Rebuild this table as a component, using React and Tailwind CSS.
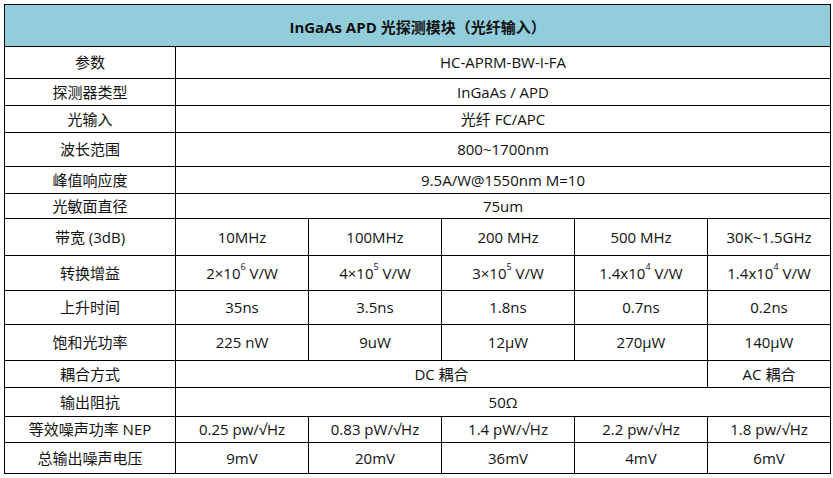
const rows = [
  { label: "参数", h: 32, cells: [{ t: "HC-APRM-BW-I-FA", span: 5 }] },
  { label: "探测器类型", h: 27, cells: [{ t: "InGaAs / APD", span: 5 }] },
  { label: "光输入", h: 27, cells: [{ t: "光纤 FC/APC", span: 5 }] },
  { label: "波长范围", h: 34, cells: [{ t: "800~1700nm", span: 5 }] },
  { label: "峰值响应度", h: 27, cells: [{ t: "9.5A/W@1550nm M=10", span: 5 }] },
  { label: "光敏面直径", h: 25, cells: [{ t: "75um", span: 5 }] },
  {
    label: "带宽 (3dB)",
    h: 37,
    cells: [{ t: "10MHz" }, { t: "100MHz" }, { t: "200 MHz" }, { t: "500 MHz" }, { t: "30K~1.5GHz" }],
  },
  {
    label: "转换增益",
    h: 35,
    cells: [
      { t: <>2×10<sup>6</sup> V/W</> },
      { t: <>4×10<sup>5</sup> V/W</> },
      { t: <>3×10<sup>5</sup> V/W</> },
      { t: <>1.4x10<sup>4</sup> V/W</> },
      { t: <>1.4x10<sup>4</sup> V/W</> },
    ],
  },
  {
    label: "上升时间",
    h: 34,
    cells: [{ t: "35ns" }, { t: "3.5ns" }, { t: "1.8ns" }, { t: "0.7ns" }, { t: "0.2ns" }],
  },
  {
    label: "饱和光功率",
    h: 36,
    cells: [{ t: "225 nW" }, { t: "9uW" }, { t: "12μW" }, { t: "270μW" }, { t: "140μW" }],
  },
  { label: "耦合方式", h: 27, cells: [{ t: "DC 耦合", span: 4 }, { t: "AC 耦合" }] },
  { label: "输出阻抗", h: 29, cells: [{ t: "50Ω", span: 5 }] },
  {
    label: "等效噪声功率 NEP",
    h: 26,
    cells: [
      { t: "0.25 pw/√Hz" },
      { t: "0.83 pW/√Hz" },
      { t: "1.4 pW/√Hz" },
      { t: "2.2 pw/√Hz" },
      { t: "1.8 pw/√Hz" },
    ],
  },
  {
    label: "总输出噪声电压",
    h: 31,
    cells: [{ t: "9mV" }, { t: "20mV" }, { t: "36mV" }, { t: "4mV" }, { t: "6mV" }],
  },
];

export default function App() {
  return (
    <div className="w-[833px] h-[478px] bg-white pt-[4px] pl-[4px] font-['Open_Sans','Noto_Sans_CJK_SC',sans-serif] text-[15px] text-[#111]">
      <table className="table-fixed border-collapse w-[826px]">
        <colgroup>
          <col className="w-[171px]" />
          <col className="w-[133px]" />
          <col className="w-[133px]" />
          <col className="w-[133px]" />
          <col className="w-[133px]" />
          <col className="w-[123px]" />
        </colgroup>
        <tbody>
          <tr className="h-[42px]">
            <td colSpan={6} className="border border-black bg-[#92cddc] text-center font-bold pt-[4px] leading-none">
              InGaAs APD 光探测模块（光纤输入）
            </td>
          </tr>
          {rows.map((r) => (
            <tr key={r.label} style={{ height: r.h }}>
              <td className="border border-black text-center p-0 leading-none">{r.label}</td>
              {r.cells.map((c, i) => (
                <td
                  key={i}
                  colSpan={c.span || 1}
                  className="border border-black text-center p-0 leading-none whitespace-nowrap [&_sup]:text-[9px] [&_sup]:align-[4px]"
                >
                  {c.t}
                </td>
              ))}
            </tr>
          ))}
        </tbody>
      </table>
    </div>
  );
}
